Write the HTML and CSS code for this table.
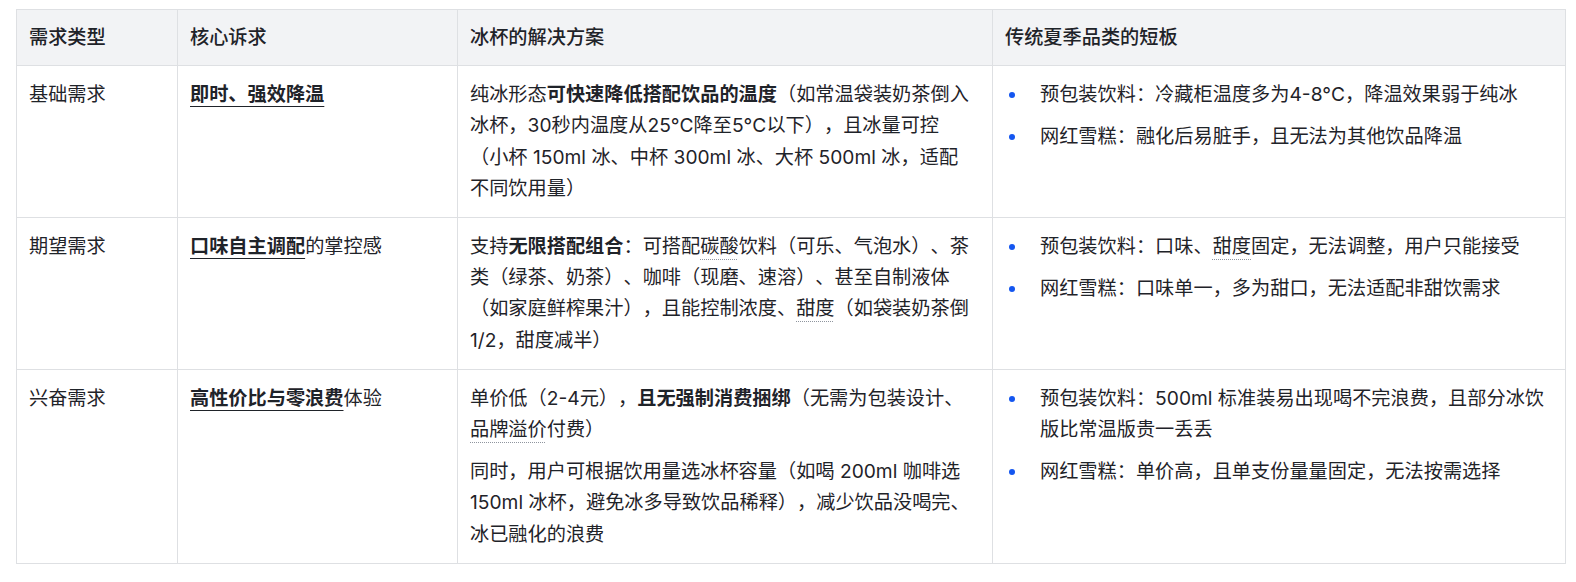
FILE: index.html
```html
<!DOCTYPE html>
<html lang="zh-CN">
<head>
<meta charset="utf-8">
<title>冰杯需求分析</title>
<link rel="stylesheet" href="styles.css">
</head>
<body>
<div class="wrap">
<table class="grid">
  <colgroup>
    <col class="c1"><col class="c2"><col class="c3"><col class="c4">
  </colgroup>
  <thead>
    <tr><th>需求类型</th><th>核心诉求</th><th>冰杯的解决方案</th><th>传统夏季品类的短板</th></tr>
  </thead>
  <tbody>
    <tr>
      <td>基础需求</td>
      <td><b class="key">即时、强效降温</b></td>
      <td><p>纯冰形态<b>可快速降低搭配饮品的温度</b>（如常温袋装奶茶倒入冰杯，30秒内温度从25°C降至5°C以下），且冰量可控<br>（小杯 150ml 冰、中杯 300ml 冰、大杯 500ml 冰，适配<br>不同饮用量）</p></td>
      <td><ul class="dots"><li>预包装饮料：冷藏柜温度多为4-8°C，降温效果弱于纯冰</li><li>网红雪糕：融化后易脏手，且无法为其他饮品降温</li></ul></td>
    </tr>
    <tr>
      <td>期望需求</td>
      <td><b class="key">口味自主调配</b>的掌控感</td>
      <td><p>支持<b>无限搭配组合</b>：可搭配<span class="ent">碳酸</span>饮料（可乐、气泡水）、茶类（绿茶、奶茶）、咖啡（现磨、速溶）、甚至自制液体（如家庭鲜榨果汁），且能控制浓度、<span class="ent">甜度</span>（如袋装奶茶倒1/2，甜度减半）</p></td>
      <td><ul class="dots"><li>预包装饮料：口味、<span class="ent">甜度</span>固定，无法调整，用户只能接受</li><li>网红雪糕：口味单一，多为甜口，无法适配非甜饮需求</li></ul></td>
    </tr>
    <tr>
      <td>兴奋需求</td>
      <td><b class="key">高性价比与零浪费</b>体验</td>
      <td><p>单价低（2-4元），<b>且无强制消费捆绑</b>（无需为包装设计、<span class="ent">品牌溢价</span>付费）</p><p>同时，用户可根据饮用量选冰杯容量（如喝 200ml 咖啡选 150ml 冰杯，避免冰多导致饮品稀释），减少饮品没喝完、冰已融化的浪费</p></td>
      <td><ul class="dots"><li>预包装饮料：500ml 标准装易出现喝不完浪费，且部分冰饮版比常温版贵一丢丢</li><li>网红雪糕：单价高，且单支份量量固定，无法按需选择</li></ul></td>
    </tr>
  </tbody>
</table>
</div>
</body>
</html>
```

FILE: styles.css
```css
html, body {
  margin: 0;
  padding: 0;
  background: #ffffff;
}

body {
  font-family: Inter, "Noto Sans CJK SC", "Noto Sans", sans-serif;
  font-size: 19.2px;
  line-height: 31.2px;
  color: #1f2329;
  text-spacing-trim: space-all;
}

.wrap {
  padding: 9px 11px 0 16px;
}

.grid {
  width: 100%;
  table-layout: fixed;
  border-collapse: collapse;
}

.c1 { width: 161px; }
.c2 { width: 280px; }
.c3 { width: 535px; }
.c4 { width: 573px; }

.grid th,
.grid td {
  border: 1px solid #dee0e3;
  vertical-align: top;
  text-align: left;
  padding: 13px 12px;
}

.grid th {
  background: #f2f3f5;
  font-weight: 500;
  padding: 12px 12px;
}

.grid p {
  margin: 0;
}

.grid p + p {
  margin-top: 11px;
}

b {
  font-weight: 700;
}

.key {
  text-decoration: underline;
  text-decoration-color: #1f2329;
  text-underline-offset: 5px;
  text-decoration-thickness: 1px;
}

.ent {
  text-decoration: underline dotted;
  text-decoration-color: #8f959e;
  text-underline-offset: 6px;
  text-decoration-thickness: 1px;
}

.dots {
  list-style: none;
  margin: 0;
  padding: 0;
}

.dots li {
  display: flex;
  align-items: flex-start;
}

.dots li + li {
  margin-top: 11px;
}

.dots li::before {
  content: "";
  flex: none;
  width: 6px;
  height: 6px;
  border-radius: 50%;
  background: #1456f0;
  margin: 13px 25px 0 4px;
}
```
